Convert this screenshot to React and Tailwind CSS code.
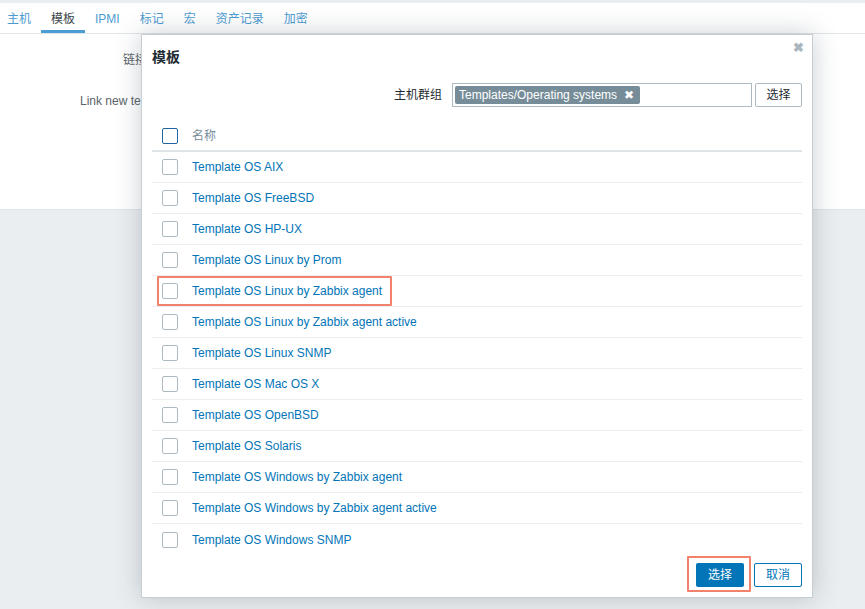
import React from "react";

const FONT = { fontFamily: '"Liberation Sans", Arial, "Noto Sans CJK SC", sans-serif' };

const rows = [
  "Template OS AIX",
  "Template OS FreeBSD",
  "Template OS HP-UX",
  "Template OS Linux by Prom",
  "Template OS Linux by Zabbix agent",
  "Template OS Linux by Zabbix agent active",
  "Template OS Linux SNMP",
  "Template OS Mac OS X",
  "Template OS OpenBSD",
  "Template OS Solaris",
  "Template OS Windows by Zabbix agent",
  "Template OS Windows by Zabbix agent active",
  "Template OS Windows SNMP",
];

const tabs = ["主机", "模板", "IPMI", "标记", "宏", "资产记录", "加密"];

function Checkbox({ blue }) {
  return (
    <span
      className={
        "block w-4 h-4 rounded-[2px] bg-white border " +
        (blue ? "border-[#1f65a6]" : "border-[#acbbc2]")
      }
    />
  );
}

export default function App() {
  return (
    <div
      className="relative w-[865px] h-[609px] overflow-hidden bg-[#ebeef0] text-[12px] text-[#1f2c33]"
      style={FONT}
    >
      {/* page behind */}
      <div className="h-[3px] bg-[#ebeef0]" />
      <div className="flex h-[31px] bg-white border-b border-[#dfe4e7]">
        <div className="flex -ml-[3px]">
          {tabs.map((t, i) => (
            <div
              key={t}
              className={
                "px-[10px] flex items-center h-full pt-[2px] " +
                (i === 1
                  ? "text-[#3e474c] border-b-[3px] border-[#4a9ed4] pt-[5px]"
                  : "text-[#4c9bd0]")
              }
            >
              {t}
            </div>
          ))}
        </div>
      </div>
      <div className="h-[176px] bg-white border-b border-[#dfe4e7] relative">
        <div className="absolute left-[123px] top-[19px] w-[18px] overflow-hidden whitespace-nowrap text-[#5c6469] leading-[14px]">链接的模板</div>
        <div className="absolute left-[80px] top-[60px] w-[61px] overflow-hidden whitespace-nowrap text-[#5c6469] leading-[14px]">Link new templates</div>
      </div>

      {/* modal */}
      <div className="absolute left-[141px] top-[34px] w-[672px] h-[564px] bg-white border border-[#c5ced3] shadow-[0_0_24px_rgba(40,60,75,0.25)] flex flex-col px-[10px]">
        <div className="pt-[13px] h-[32px] text-[14px] font-bold leading-[18px] text-[#1f2c33]">模板</div>
        <button className="absolute right-[8px] top-[6px] text-[#a9b6bd] text-[13px] leading-none font-bold">✖</button>

        <div className="mt-[16px] flex items-center justify-end h-[24px]">
          <span className="mr-[10px] text-[#1f2c33]">主机群组</span>
          <div className="w-[300px] h-[24px] border border-[#acbbc2] flex items-center px-[2px]">
            <span className="bg-[#768d99] text-white h-[18px] flex items-center pl-[4px] pr-[6px] rounded-[2px] leading-none">
              Templates/Operating systems
              <span className="ml-[7px] text-[12px]">✖</span>
            </span>
          </div>
          <button className="ml-[3px] w-[47px] h-[24px] border border-[#acbbc2] rounded-[2px] bg-white text-[#1f2c33]">
            选择
          </button>
        </div>

        <div className="mt-[14px] h-[31px] flex items-center pl-[10px] border-b-2 border-[#dfe4e7]">
          <Checkbox blue />
          <span className="ml-[14px] text-[#768d99]">名称</span>
        </div>

        {rows.map((r, i) => (
          <div
            key={r}
            className={
              "h-[31px] flex items-center pl-[10px] " +
              (i < rows.length - 1 ? "border-b border-[#ebeef0]" : "")
            }
          >
            <Checkbox />
            <span className="ml-[14px] text-[#0275b8]">{r}</span>
          </div>
        ))}

        <div className="mt-auto mb-[10px] flex justify-end gap-[10px]">
          <button className="w-[48px] h-[24px] rounded-[2px] bg-[#0275b8] text-white">选择</button>
          <button className="w-[48px] h-[24px] rounded-[2px] border border-[#0275b8] bg-white text-[#0275b8]">取消</button>
        </div>
      </div>

      {/* red highlight boxes */}
      <div className="absolute left-[157px] top-[276px] w-[235px] h-[30px] border-2 border-[#f2826c] rounded-[1px]" />
      <div className="absolute left-[687px] top-[556px] w-[64px] h-[36px] border-2 border-[#f2826c] rounded-[1px]" />
    </div>
  );
}
